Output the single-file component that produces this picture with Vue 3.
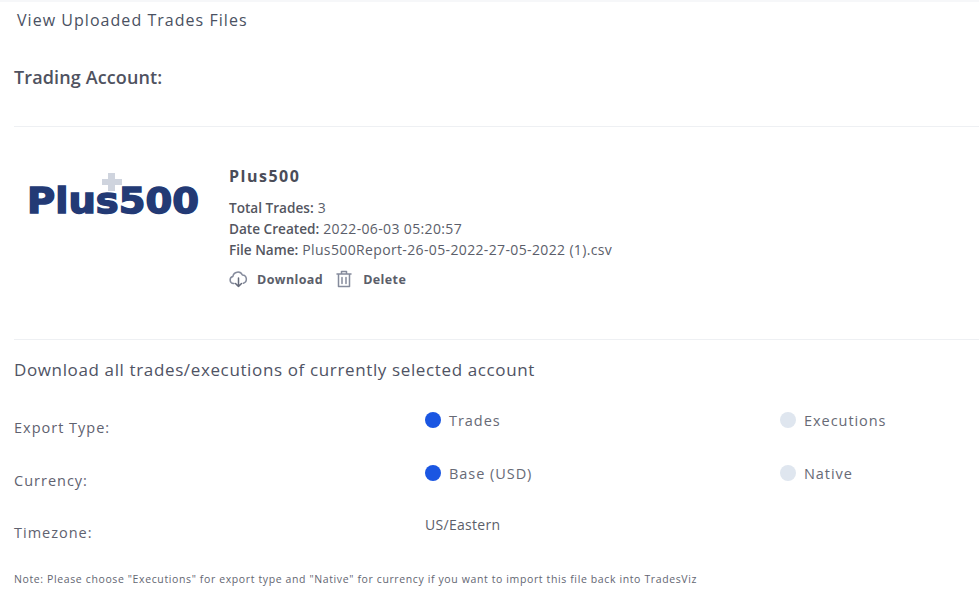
<script setup>
const exportRows = [
  { label: 'Export Type:', first: 'Trades', second: 'Executions' },
  { label: 'Currency:', first: 'Base (USD)', second: 'Native' },
]
</script>

<template>
  <div class="page">
    <div class="top-line"></div>
    <h4 class="page-title">View Uploaded Trades Files</h4>
    <h3 class="account-title">Trading Account:</h3>
    <hr class="rule rule-one" />

    <div class="file-card">
      <div class="logo-box">
        <svg class="logo" width="172" height="52" viewBox="0 0 172 52">
          <path d="M80 0h7v6h7v6h-7v6h-7v-6h-6V6h6z" fill="#cfd4de" />
          <text class="logo-text" x="-1" y="40" textLength="172" lengthAdjust="spacingAndGlyphs">Plus500</text>
        </svg>
      </div>
      <div class="file-info">
        <h5 class="broker">Plus500</h5>
        <p class="meta"><b>Total Trades:</b> 3</p>
        <p class="meta"><b>Date Created:</b> 2022-06-03 05:20:57</p>
        <p class="meta"><b>File Name:</b> Plus500Report-26-05-2022-27-05-2022 (1).csv</p>
        <div class="actions">
          <svg class="icon" width="19" height="18" viewBox="0 0 19 18" fill="none" stroke="#858b9c" stroke-width="1.5" stroke-linecap="round" stroke-linejoin="round">
            <path d="M5 13.5H4.5a3.6 3.6 0 0 1-.6-7.1A5 5 0 0 1 13.4 5a4.2 4.2 0 0 1 1 8.2" />
            <path d="M9.5 8v8.5M6.5 13.5l3 3 3-3" stroke="#666b7b" />
          </svg>
          <span class="action-label download">Download</span>
          <svg class="icon" width="16" height="18" viewBox="0 0 16 18" fill="none" stroke="#858b9c" stroke-width="1.5" stroke-linecap="round" stroke-linejoin="round">
            <path d="M1 4h14M5.5 4V1.5h5V4M2.5 4v12.5h11V4" />
            <path d="M6 7.5v6M10 7.5v6" />
          </svg>
          <span class="action-label">Delete</span>
        </div>
      </div>
    </div>
    <hr class="rule" />

    <div class="export">
      <h4 class="export-title">Download all trades/executions of currently selected account</h4>
      <div class="export-rows">
        <div v-for="row in exportRows" :key="row.label" class="export-row">
          <span class="row-label">{{ row.label }}</span>
          <span class="choice"><i class="dot on"></i>{{ row.first }}</span>
          <span class="choice"><i class="dot"></i>{{ row.second }}</span>
        </div>
        <div class="export-row">
          <span class="row-label zone-label">Timezone:</span>
          <span class="zone">US/Eastern</span>
        </div>
      </div>
      <p class="note">Note: Please choose "Executions" for export type and "Native" for currency if you want to import this file back into TradesViz</p>
    </div>
  </div>
</template>

<style>
html, body { background: #fff; }
</style>

<style scoped>
.page {
  width: 979px;
  height: 609px;
  overflow: hidden;
  background: #fff;
  color: #4f5260;
  font-family: "Open Sans", "Noto Sans", sans-serif;
}
.top-line { height: 2px; background: #f6f7f9; }
.page-title {
  margin: 8px 0 0 17px;
  font-size: 16px;
  line-height: 20px;
  font-weight: 400;
  letter-spacing: 1.04px;
  color: #4a5162;
}
.account-title {
  margin: 35px 0 0 14px;
  font-size: 18px;
  line-height: 24px;
  font-weight: 600;
  letter-spacing: 0.12px;
  color: #4f5260;
}
.rule {
  margin: 0 0 0 14px;
  border: 0;
  border-top: 1px solid #eef0f3;
}
.rule-one { margin-top: 37px; }
.file-card {
  display: flex;
  height: 212px;
  box-sizing: border-box;
  padding-top: 37px;
}
.logo-box {
  width: 229px;
  padding: 9px 0 0 28px;
  box-sizing: border-box;
  flex-shrink: 0;
}
.logo { display: block; overflow: visible; }
.logo-text {
  font-family: "DejaVu Sans", sans-serif;
  font-weight: 700;
  font-size: 36px;
  fill: #233a75;
  stroke: #233a75;
  stroke-width: 1.5px;
}
.broker {
  margin: 0 0 9px;
  font-size: 16px;
  line-height: 24px;
  font-weight: 700;
  letter-spacing: 1.5px;
  color: #4a4c58;
}
.meta {
  margin: 0;
  font-size: 14px;
  line-height: 21px;
  letter-spacing: 0.36px;
  color: #5b5e6a;
}
.meta b { font-size: 13.6px; font-weight: 600; letter-spacing: 0; color: #54565f; }
.actions {
  display: flex;
  align-items: center;
  margin-top: 10px;
}
.action-label {
  margin-left: 9px;
  font-size: 12.5px;
  font-weight: 700;
  letter-spacing: 0.4px;
  color: #5b5e6a;
}
.download { margin-right: 13px; }
.icon + .action-label:last-child { margin-left: 11px; }
.export { padding-left: 14px; }
.export-title {
  margin: 18px 0 0;
  font-size: 17px;
  line-height: 24px;
  font-weight: 400;
  letter-spacing: 0.63px;
  color: #4f5364;
}
.export-rows { padding-top: 26px; }
.export-row {
  display: grid;
  grid-template-columns: 411px 355px 1fr;
  height: 53px;
  font-size: 14.5px;
  letter-spacing: 0.95px;
  color: #676a76;
}
.row-label {
  padding-top: 8px;
  color: #5f6270;
  line-height: 24px;
  letter-spacing: 1px;
}
.zone-label { padding-top: 7px; }
.choice { display: flex; align-items: center; height: 24px; }
.dot {
  width: 16px;
  height: 16px;
  margin-right: 8px;
  border-radius: 50%;
  background: #dfe6ef;
}
.dot.on { background: #1a56e2; }
.zone { font-size: 14px; letter-spacing: 0.3px; line-height: 22px; color: #5b5e6a; }
.note {
  margin: 4px 0 0;
  font-size: 10.5px;
  line-height: 16px;
  letter-spacing: 0.62px;
  color: #636672;
}
</style>
